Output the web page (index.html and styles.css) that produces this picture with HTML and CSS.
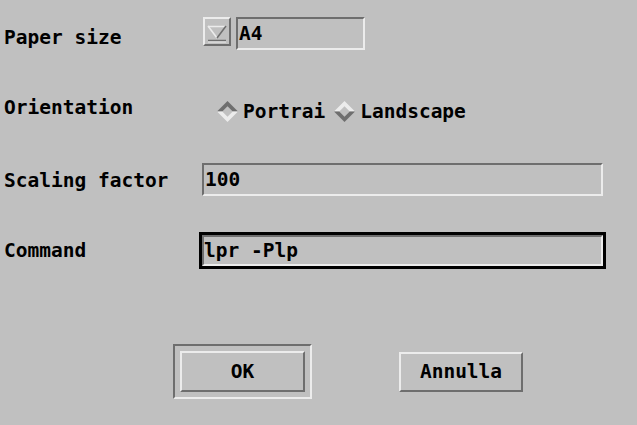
FILE: index.html
```html
<!DOCTYPE html>
<html lang="it">

<head>
    <meta charset="UTF-8">
    <title>Print setup</title>
    <link rel="stylesheet" href="styles.css">
</head>

<body>
    <div class="dialog">
        <!-- Paper size: option menu plus entry -->
        <div class="row row-paper">
            <span class="label">Paper size</span>
            <span class="menubutton">
                <svg width="24" height="25" viewBox="0 0 24 25">
                    <polygon points="3,7 21,7 12,19" fill="#c0c0c0" />
                    <line x1="3" y1="7.5" x2="21" y2="7.5" stroke="#ececec" stroke-width="1.5" />
                    <line x1="3" y1="7" x2="12" y2="19" stroke="#ececec" stroke-width="1.5" />
                    <line x1="21" y1="7" x2="12" y2="19" stroke="#6e6e6e" stroke-width="1.5" />
                    <line x1="3" y1="21.5" x2="21" y2="21.5" stroke="#6e6e6e" stroke-width="1.5" />
                    <line x1="3" y1="23" x2="21" y2="23" stroke="#ececec" stroke-width="1" />
                </svg>
            </span>
            <span class="hl hl-small"><span class="field">A4</span></span>
        </div>

        <!-- Orientation radio buttons -->
        <div class="row row-orient">
            <span class="label">Orientation</span>
            <span class="radios">
                <span class="radio">
                    <svg width="21" height="21" viewBox="0 0 20 20">
                        <polygon points="0,10 10,0 20,10" fill="#6e6e6e" />
                        <polygon points="0,10 10,20 20,10" fill="#ececec" />
                        <polygon points="10,5 15,10 10,15 5,10" fill="#c0c0c0" />
                    </svg>
                    <span>Portrai</span>
                </span>
                <span class="radio">
                    <svg width="21" height="21" viewBox="0 0 20 20">
                        <polygon points="0,10 10,0 20,10" fill="#ececec" />
                        <polygon points="0,10 10,20 20,10" fill="#6e6e6e" />
                        <polygon points="10,5 15,10 10,15 5,10" fill="#c0c0c0" />
                    </svg>
                    <span>Landscape</span>
                </span>
            </span>
        </div>

        <!-- Scaling factor -->
        <div class="row row-scale">
            <span class="label">Scaling factor</span>
            <span class="hl hl-wide"><span class="field">100</span></span>
        </div>

        <!-- Command (focused) -->
        <div class="row row-cmd">
            <span class="label">Command</span>
            <span class="hl hl-wide focus"><span class="field">lpr -Plp</span></span>
        </div>

        <!-- OK / Annulla -->
        <div class="buttons">
            <span class="default-ring"><button class="btn">OK</button></span>
            <button class="btn btn-cancel">Annulla</button>
        </div>
    </div>
</body>

</html>
```

FILE: styles.css
```css
/* Whole window is the grey Tk dialog */
body {
    margin: 0;
    background-color: #c0c0c0;
    color: #000;
    font-family: "DejaVu Sans Mono", "Liberation Mono", monospace;
    font-weight: bold;
    font-size: 19.5px;
    line-height: 20px;
}

.dialog {
    width: 637px;
    height: 425px;
    padding-top: 15px;
    box-sizing: border-box;
    overflow: hidden;
}

/* One form row: label column then the widgets */
.row {
    display: flex;
    align-items: flex-start;
    padding-left: 4px;
}

.label {
    width: 196px;
    flex-shrink: 0;
    white-space: nowrap;
}

.row-paper {
    height: 37px;
}

.row-paper .label {
    width: 199px;
    margin-top: 13px;
}

.row-orient {
    height: 30px;
    margin-top: 43px;
}

.row-orient .label {
    margin-top: 3px;
}

.row-scale {
    height: 37px;
    margin-top: 36px;
}

.row-scale .label {
    margin-top: 10px;
}

.row-cmd {
    height: 37px;
    margin-top: 34px;
}

.row-cmd .label {
    margin-top: 9px;
}

/* Option menu button */
.menubutton {
    display: flex;
    align-items: center;
    justify-content: center;
    width: 28px;
    height: 29px;
    margin-top: 2px;
    box-sizing: border-box;
    border: 2px solid;
    border-color: #ececec #6e6e6e #6e6e6e #ececec;
}

/* Highlight ring around an entry (black when focused) */
.hl {
    display: block;
    border: 2px solid #c0c0c0;
    height: 37px;
    box-sizing: border-box;
}

.hl.focus {
    border: 3px solid #000;
    margin-left: -1px;
    width: 407px;
}

.hl-small {
    width: 133px;
    margin-left: 3px;
}

.hl-wide {
    width: 405px;
}

/* Sunken entry */
.field {
    display: block;
    height: 100%;
    box-sizing: border-box;
    border: 2px solid;
    border-color: #6e6e6e #ececec #ececec #6e6e6e;
    padding: 5px 0 0 1px;
    white-space: pre;
}

.focus .field {
    padding-top: 4px;
    padding-left: 0;
}

/* Radio buttons */
.radios {
    display: flex;
    gap: 9px;
    margin-top: 6px;
    margin-left: 17px;
}

.radio {
    display: flex;
    align-items: center;
    gap: 5px;
    white-space: nowrap;
}

/* Bottom buttons */
.buttons {
    display: flex;
    align-items: center;
    gap: 87px;
    padding-left: 173px;
    margin-top: 75px;
}

.default-ring {
    display: block;
    padding: 5px;
    border: 2px solid;
    border-color: #6e6e6e #ececec #ececec #6e6e6e;
}

.btn {
    display: block;
    width: 125px;
    height: 41px;
    margin: 0;
    padding: 0;
    background-color: #c0c0c0;
    border: 2px solid;
    border-color: #ececec #6e6e6e #6e6e6e #ececec;
    font: inherit;
    color: #000;
}

.btn-cancel {
    width: 124px;
    height: 40px;
}
```
